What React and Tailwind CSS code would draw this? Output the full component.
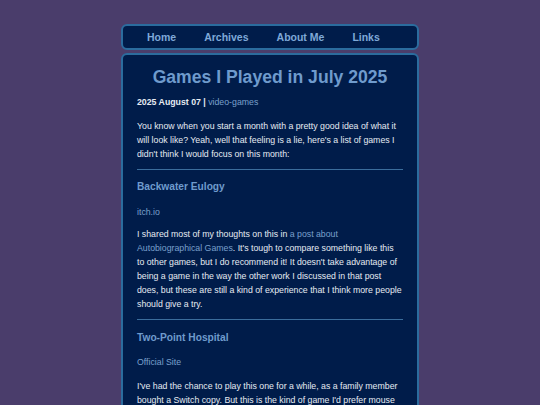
import React from 'react';

const navLinks = ['Home', 'Archives', 'About Me', 'Links'];

export default function App() {
    return (
        <div className="min-h-[405px] bg-[#4a3d6b] pt-[24px] font-['Liberation_Sans',Arial,sans-serif]">
            <div className="mx-auto w-[298px] flex flex-col gap-[3px]">
                {/* Nav */}
                <nav className="h-[26px] rounded-[6px] border-2 border-[#2b6c9e] bg-[#001c4a] flex items-center gap-[28px] pl-[24px] pt-[1px]">
                    {navLinks.map(link => (
                        <a key={link} href="#" className="text-[10.5px] font-bold text-[#7fa9d8]">
                            {link}
                        </a>
                    ))}
                </nav>

                {/* Post */}
                <article className="rounded-[6px] border-2 border-[#2b6c9e] bg-[#001c4a] px-[14px] pt-[9px] pb-[20px] text-[8.75px] leading-[14px] text-[#e6ebf2]">
                    <h1 className="text-center text-[17.6px] font-bold leading-[26px] text-[#6f9bcd]">
                        Games I Played in July 2025
                    </h1>
                    <div className="mt-[5px]">
                        <span className="font-bold">2025 August 07 |</span>{' '}
                        <a href="#" className="text-[#7aa0cc]">video-games</a>
                    </div>
                    <p className="mt-[10px]">
                        You know when you start a month with a pretty good idea of what it will look like? Yeah, well that feeling is a lie, here's a list of games I didn't think I would focus on this month:
                    </p>
                    <hr className="mt-[8px] border-t border-[#3b6d9c]" />

                    <h2 className="mt-[8px] text-[10.2px] font-bold leading-[18px] text-[#6f9bcd]">Backwater Eulogy</h2>
                    <p className="mt-[9px]">
                        <a href="#" className="text-[#7aa0cc]">itch.io</a>
                    </p>
                    <p className="mt-[8px]">
                        I shared most of my thoughts on this in{' '}
                        <a href="#" className="text-[#7aa0cc]">a post about Autobiographical Games</a>. It's tough to compare something like this to other games, but I do recommend it! It doesn't take advantage of being a game in the way the other work I discussed in that post does, but these are still a kind of experience that I think more people should give a try.
                    </p>
                    <hr className="mt-[8px] border-t border-[#3b6d9c]" />

                    <h2 className="mt-[9px] text-[10.2px] font-bold leading-[18px] text-[#6f9bcd]">Two-Point Hospital</h2>
                    <p className="mt-[8px]">
                        <a href="#" className="text-[#7aa0cc]">Official Site</a>
                    </p>
                    <p className="mt-[10px]">
                        I've had the chance to play this one for a while, as a family member bought a Switch copy. But this is the kind of game I'd prefer mouse and keyboard for, so I picked it up on PC during a sale and have been enjoying it a lot.
                    </p>
                </article>
            </div>
        </div>
    );
}
